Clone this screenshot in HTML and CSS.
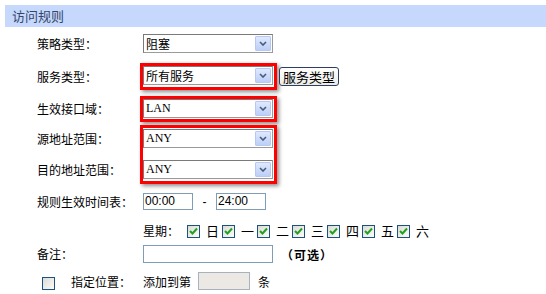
FILE: index.html
```html
<!DOCTYPE html>
<html lang="zh-CN">
<head>
<meta charset="utf-8">
<title>访问规则</title>
<link rel="stylesheet" href="styles.css">
</head>
<body>
<div class="header">访问规则</div>
<div class="form">
  <div class="row r1">
    <div class="label">策略类型：</div>
    <div class="select"><span class="val">阻塞</span><span class="arrow"><svg width="8" height="5" viewBox="0 0 8 5"><path d="M1 1 L4 4 L7 1" fill="none" stroke="#4a5a7a" stroke-width="1.6"/></svg></span></div>
  </div>
  <div class="row r2">
    <div class="label">服务类型：</div>
    <div class="redbox">
      <div class="select"><span class="val">所有服务</span><span class="arrow"><svg width="8" height="5" viewBox="0 0 8 5"><path d="M1 1 L4 4 L7 1" fill="none" stroke="#4a5a7a" stroke-width="1.6"/></svg></span></div>
    </div>
    <div class="btn">服务类型</div>
  </div>
  <div class="row r3">
    <div class="label">生效接口域：</div>
    <div class="redbox">
      <div class="select"><span class="val latin">LAN</span><span class="arrow"><svg width="8" height="5" viewBox="0 0 8 5"><path d="M1 1 L4 4 L7 1" fill="none" stroke="#4a5a7a" stroke-width="1.6"/></svg></span></div>
    </div>
  </div>
  <div class="group">
    <div class="labels">
      <div class="label">源地址范围：</div>
      <div class="label">目的地址范围：</div>
    </div>
    <div class="redbox tall">
      <div class="select"><span class="val latin">ANY</span><span class="arrow"><svg width="8" height="5" viewBox="0 0 8 5"><path d="M1 1 L4 4 L7 1" fill="none" stroke="#4a5a7a" stroke-width="1.6"/></svg></span></div>
      <div class="select"><span class="val latin">ANY</span><span class="arrow"><svg width="8" height="5" viewBox="0 0 8 5"><path d="M1 1 L4 4 L7 1" fill="none" stroke="#4a5a7a" stroke-width="1.6"/></svg></span></div>
    </div>
  </div>
  <div class="row r6">
    <div class="label">规则生效时间表：</div>
    <div class="input time">00:00</div>
    <span class="dash">-</span>
    <div class="input time">24:00</div>
  </div>
  <div class="row r7">
    <div class="label"></div>
    <span class="week">星期：</span>
    <span class="day"><span class="cb checked"><svg width="9" height="8" viewBox="0 0 9 8"><path d="M1 4 L3.5 6.5 L8 1.5" fill="none" stroke="#21a121" stroke-width="2"/></svg></span>日</span>
    <span class="day"><span class="cb checked"><svg width="9" height="8" viewBox="0 0 9 8"><path d="M1 4 L3.5 6.5 L8 1.5" fill="none" stroke="#21a121" stroke-width="2"/></svg></span>一</span>
    <span class="day"><span class="cb checked"><svg width="9" height="8" viewBox="0 0 9 8"><path d="M1 4 L3.5 6.5 L8 1.5" fill="none" stroke="#21a121" stroke-width="2"/></svg></span>二</span>
    <span class="day"><span class="cb checked"><svg width="9" height="8" viewBox="0 0 9 8"><path d="M1 4 L3.5 6.5 L8 1.5" fill="none" stroke="#21a121" stroke-width="2"/></svg></span>三</span>
    <span class="day"><span class="cb checked"><svg width="9" height="8" viewBox="0 0 9 8"><path d="M1 4 L3.5 6.5 L8 1.5" fill="none" stroke="#21a121" stroke-width="2"/></svg></span>四</span>
    <span class="day"><span class="cb checked"><svg width="9" height="8" viewBox="0 0 9 8"><path d="M1 4 L3.5 6.5 L8 1.5" fill="none" stroke="#21a121" stroke-width="2"/></svg></span>五</span>
    <span class="day"><span class="cb checked"><svg width="9" height="8" viewBox="0 0 9 8"><path d="M1 4 L3.5 6.5 L8 1.5" fill="none" stroke="#21a121" stroke-width="2"/></svg></span>六</span>
  </div>
  <div class="row r8">
    <div class="label">备注：</div>
    <div class="input remark"></div>
    <span class="opt">（可选）</span>
  </div>
  <div class="row r9">
    <span class="cb first"></span>
    <span class="pos">指定位置：</span>
    <span class="addto">添加到第</span>
    <div class="input disabled"></div>
    <span class="tiao">条</span>
  </div>
</div>
</body>
</html>
```
FILE: styles.css
```css
* { box-sizing: border-box; }
html, body {
  margin: 0;
  padding: 0;
  background: #ffffff;
}
body {
  width: 546px;
  height: 294px;
  overflow: hidden;
  font-family: "Noto Sans CJK SC", "Liberation Sans", sans-serif;
  font-size: 12px;
  color: #000;
}
.header {
  margin: 5px 0 0 5px;
  height: 22px;
  line-height: 22px;
  padding-left: 7px;
  background: #c6d8fb;
  color: #34466b;
  font-size: 13px;
}
.form {
  padding-left: 37px;
}
.row {
  display: flex;
  align-items: center;
}
.label {
  width: 106px;
  flex: none;
  line-height: 14px;
  white-space: nowrap;
}
.r1 { height: 33px; }
.r2 { height: 33px; }
.r3 { height: 31px; }
.r6 { height: 35px; }
.r7 { height: 24px; }
.r8 { height: 22px; }
.r9 { height: 32px; }

.select {
  width: 130px;
  height: 19px;
  display: flex;
  align-items: stretch;
  background: #fff;
  border: 1px solid #9a9a9a;
  border-top-color: #7a7a7a;
  border-left-color: #7a7a7a;
}
.select .val {
  flex: 1;
  padding-left: 2px;
  line-height: 17px;
  font-size: 12px;
}
.select .val.latin {
  font-family: "Liberation Serif", serif;
  font-size: 12px;
}
.select .arrow {
  width: 16px;
  margin: 1px;
  display: flex;
  align-items: center;
  justify-content: center;
  background: linear-gradient(#dfe8fd, #bccff8);
  border: 1px solid #b6c8f3;
  border-radius: 1px;
}
.redbox {
  margin-left: -3px;
  border: 3px solid #f00;
  padding: 0 1px 1px 0;
  box-shadow: 2px 2px 4px rgba(0, 0, 0, 0.45);
  background: #fff;
}
.r2 .redbox { padding: 0 1px 2px 0; }
.btn {
  margin-left: 2px;
  height: 19px;
  padding: 0 3px;
  line-height: 17px;
  border: 1px solid #2d3f5f;
  border-radius: 3px;
  background: linear-gradient(#ffffff, #ecebe6);
  font-size: 13px;
}
.group {
  display: flex;
  margin-top: 1px;
  height: 59px;
}
.labels {
  display: flex;
  flex-direction: column;
  padding-top: 4px;
  gap: 12px;
}
.labels .label {
  height: 19px;
  line-height: 19px;
}
.redbox.tall {
  padding: 1px 1px 2px 0;
  display: flex;
  flex-direction: column;
  gap: 12px;
}
.input {
  height: 18px;
  border: 1px solid #7f9db9;
  background: #fff;
  line-height: 16px;
  padding-left: 1px;
  font-family: "Liberation Sans", sans-serif;
  font-size: 12px;
}
.time { width: 50px; height: 17px; line-height: 15px; }
.dash {
  width: 23px;
  text-align: center;
  font-family: "Liberation Sans", sans-serif;
}
.week { width: 44px; line-height: 14px; }
.day {
  display: flex;
  align-items: center;
  width: 35px;
  line-height: 14px;
  font-size: 13px;
}
.cb {
  width: 13px;
  height: 13px;
  border: 1px solid #1c5180;
  background: linear-gradient(135deg, #dcdcd7, #fbfbf8);
  display: inline-flex;
  align-items: center;
  justify-content: center;
  margin-right: 6px;
  flex: none;
}
.remark { width: 130px; }
.opt {
  margin-left: 8px;
  letter-spacing: 1px;
  font-weight: bold;
}
.r9 .cb.first {
  margin-left: 5px;
  margin-right: 0;
  position: relative;
  top: 2px;
}
.pos { margin-left: 16px; width: 72px; }
.addto { width: 55px; }
.disabled {
  width: 52px;
  background: #ece9e4;
  border-color: #a8b2bd;
}
.tiao { margin-left: 8px; }
```
